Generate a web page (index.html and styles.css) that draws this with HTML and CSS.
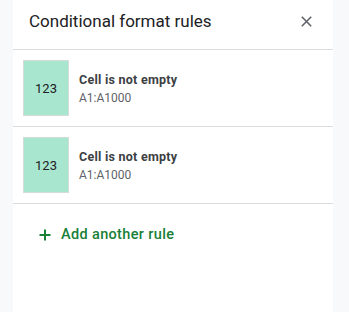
FILE: index.html
```html
<!DOCTYPE html>
<html>
<head>
<meta charset="utf-8">
<link rel="stylesheet" href="styles.css">
</head>
<body>
<div class="panel">
  <div class="header">
    <div class="title">Conditional format rules</div>
    <button class="close" aria-label="Close">
      <svg width="11" height="11" viewBox="0 0 11 11"><path d="M0.8 0.8L10.2 10.2M10.2 0.8L0.8 10.2" stroke="#5f6368" stroke-width="1.6" fill="none"/></svg>
    </button>
  </div>
  <div class="rule">
    <div class="swatch">123</div>
    <div class="info">
      <div class="cond">Cell is not empty</div>
      <div class="range">A1:A1000</div>
    </div>
  </div>
  <div class="rule">
    <div class="swatch">123</div>
    <div class="info">
      <div class="cond">Cell is not empty</div>
      <div class="range">A1:A1000</div>
    </div>
  </div>
  <div class="add">
    <svg class="plus" width="12" height="12" viewBox="0 0 12 12"><path d="M6 0.5V11.5M0.5 6H11.5" stroke="#188038" stroke-width="2" fill="none"/></svg>
    <span>Add another rule</span>
  </div>
</div>
</body>
</html>
```
FILE: styles.css
```css
html, body {
  margin: 0;
  padding: 0;
  height: 100%;
}
body {
  background: #f8f9fa;
  font-family: Roboto, "Liberation Sans", sans-serif;
}
.panel {
  margin-left: 13px;
  width: 320px;
  height: 100%;
  background: #ffffff;
}
.header {
  display: flex;
  align-items: center;
  justify-content: space-between;
  padding: 0 16px;
  box-sizing: border-box;
  height: 50px;
  border-bottom: 1px solid #dadce0;
}
.title {
  font-size: 17px;
  color: #202124;
  margin-top: -7px;
}
.close {
  border: 0;
  background: none;
  padding: 0;
  width: 11px;
  height: 11px;
  display: flex;
  margin-right: 5px;
  margin-top: -6px;
}
.rule {
  display: flex;
  align-items: center;
  gap: 10px;
  padding: 10px;
  border-bottom: 1px solid #dadce0;
}
.swatch {
  width: 46px;
  height: 56px;
  box-sizing: border-box;
  background: #a8e6cf;
  border: 1px solid #d3dcd8;
  display: flex;
  align-items: center;
  justify-content: center;
  font-size: 13px;
  color: #202124;
}
.info {
  display: flex;
  flex-direction: column;
  margin-top: 2px;
}
.cond {
  font-size: 12.5px;
  font-weight: 700;
  letter-spacing: 0.25px;
  color: #3c4043;
  line-height: 18px;
}
.range {
  font-size: 12px;
  color: #5f6368;
  line-height: 18px;
}
.add {
  display: flex;
  align-items: center;
  gap: 10px;
  padding: 22px 0 0 26px;
  color: #188038;
  font-size: 14.5px;
  letter-spacing: 0.35px;
  font-weight: 500;
}
```
